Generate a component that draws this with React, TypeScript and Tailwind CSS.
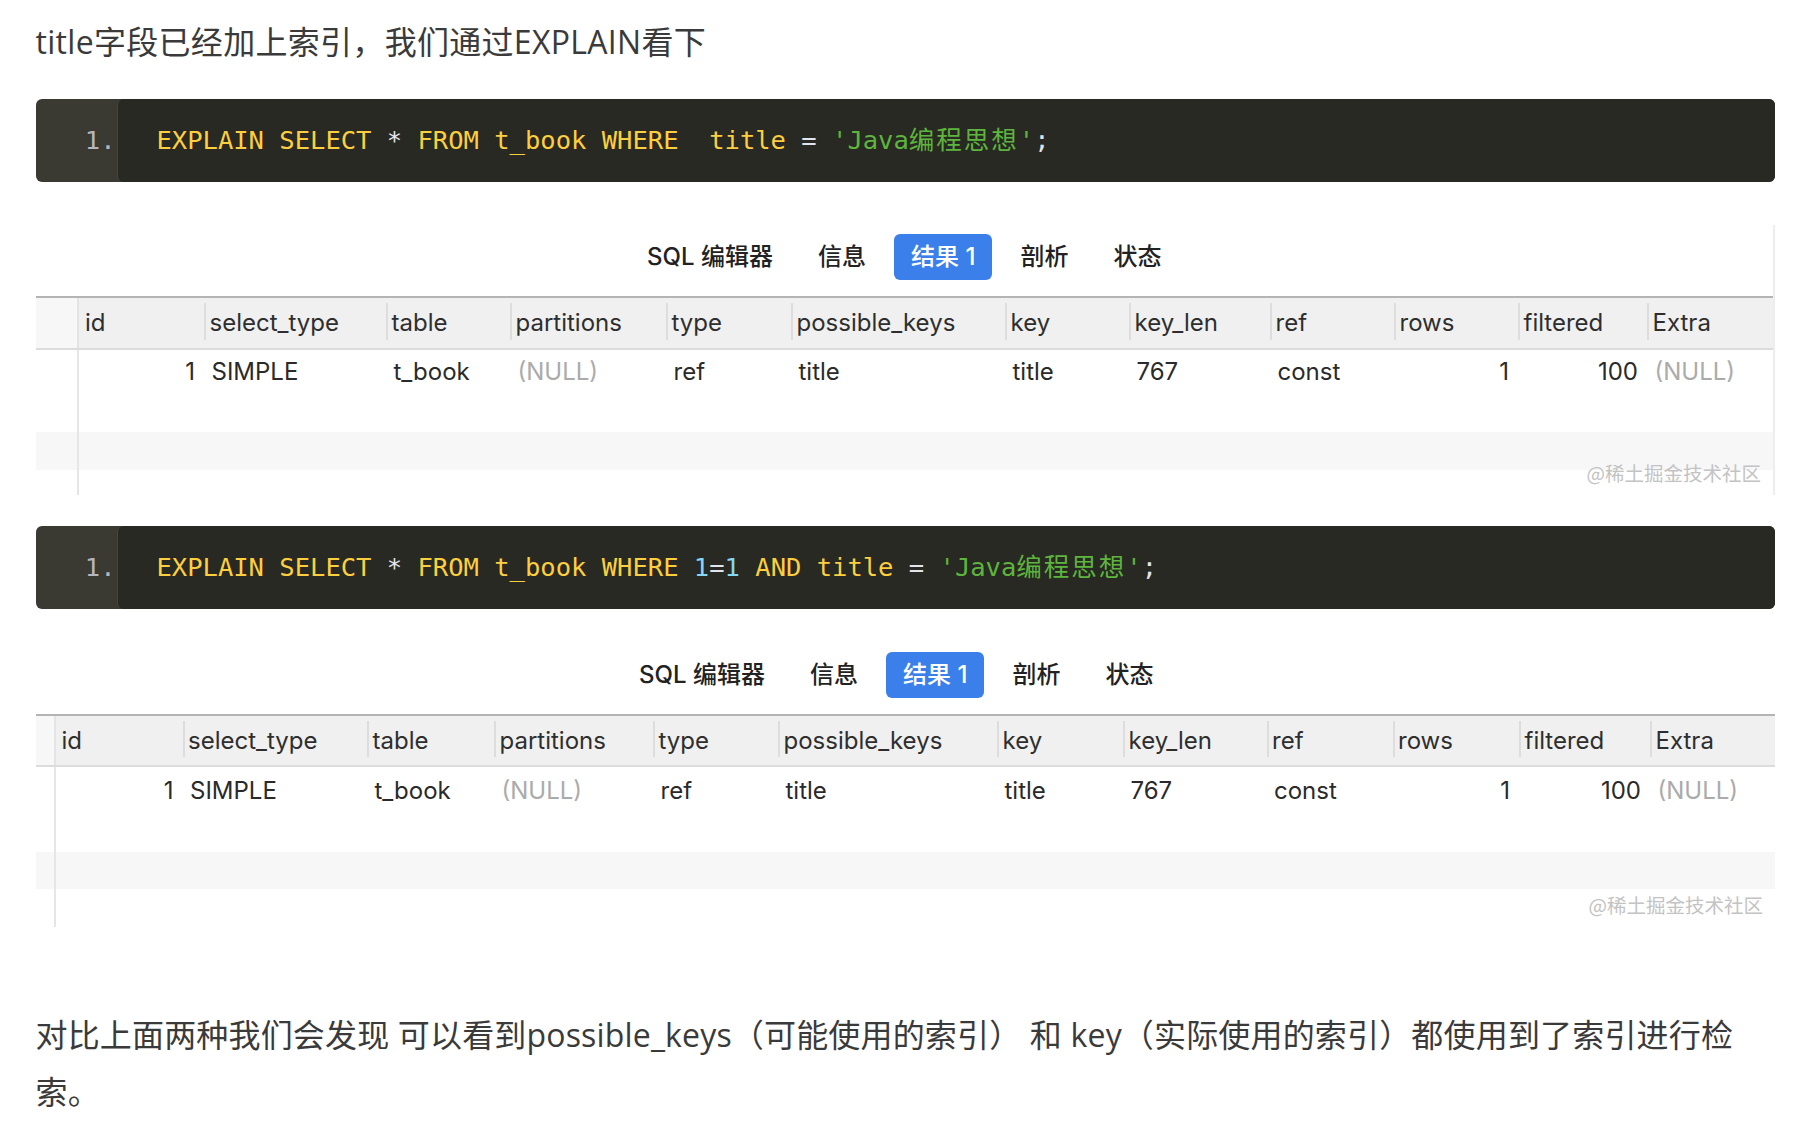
import React from "react";

const GRID1 =
  "grid grid-cols-[43.5px_125px_182px_124px_156px_125px_214px_124px_141px_124px_124px_129px_125px_1fr]";
const GRID2 =
  "grid grid-cols-[20px_127px_184.5px_127px_159px_125px_219px_126px_143.5px_126px_126.5px_131px_125px_1fr]";

const HEADERS = [
  "id",
  "select_type",
  "table",
  "partitions",
  "type",
  "possible_keys",
  "key",
  "key_len",
  "ref",
  "rows",
  "filtered",
  "Extra",
];

type Cell = { v: string; align: "l" | "r"; muted?: boolean };
const ROW: Cell[] = [
  { v: "1", align: "r" },
  { v: "SIMPLE", align: "l" },
  { v: "t_book", align: "l" },
  { v: "(NULL)", align: "l", muted: true },
  { v: "ref", align: "l" },
  { v: "title", align: "l" },
  { v: "title", align: "l" },
  { v: "767", align: "l" },
  { v: "const", align: "l" },
  { v: "1", align: "r" },
  { v: "100", align: "r" },
  { v: "(NULL)", align: "l", muted: true },
];

const ui = { fontFamily: 'Inter, "Noto Sans CJK SC", sans-serif' };
const mono = { fontFamily: '"DejaVu Sans Mono", "Noto Sans CJK SC", monospace' };

function CodeBlock({ second }: { second?: boolean }) {
  return (
    <div className="flex h-[83px] rounded-[6px] overflow-hidden bg-[#3a3932]" style={mono}>
      <div className="w-[81px] shrink-0 flex items-center justify-end pr-[1px] text-[25.5px] text-[#b6b6be]">
        1.
      </div>
      <div className="flex-1 flex items-center pl-[39px] bg-[#282923] rounded-l-[6px] border-l border-[#46453d] text-[25.5px] whitespace-pre">
        <span className="text-[#fdcf3e]">EXPLAIN SELECT </span>
        <span className="text-[#e4e4ec]">*</span>
        <span className="text-[#fdcf3e]"> FROM t_book WHERE </span>
        {second ? (
          <>
            <span className="text-[#84d8f4]">1</span>
            <span className="text-[#e4e4ec]">=</span>
            <span className="text-[#84d8f4]">1</span>
            <span className="text-[#fdcf3e]"> AND title </span>
          </>
        ) : (
          <span className="text-[#fdcf3e]"> title </span>
        )}
        <span className="text-[#e4e4ec]">=</span>
        <span className="text-[#5db53d]"> 'Java</span>
        <span className="text-[#5db53d] tracking-[2px]">编程思想</span>
        <span className="text-[#5db53d]">'</span>
        <span className="text-[#e4e4ec]">;</span>
      </div>
    </div>
  );
}

function Tabs({ shift }: { shift?: boolean }) {
  const tabs = ["SQL 编辑器", "信息", "结果 1", "剖析", "状态"];
  return (
    <div
      className={
        "flex justify-center gap-[11px] " + (shift ? "pr-[18px]" : "")
      }
    >
      {tabs.map((t) => (
        <div
          key={t}
          className={
            "h-[46px] px-[17px] flex items-center rounded-[6px] text-[24px] font-medium " +
            (t === "结果 1" ? "bg-[#3a7fea] text-white" : "text-[#222222]")
          }
        >
          {t}
        </div>
      ))}
    </div>
  );
}

function ResultShot({ second }: { second?: boolean }) {
  const grid = second ? GRID2 : GRID1;
  return (
    <div
      className={
        "relative bg-white pt-[9px] " +
        (second ? "mt-[34px]" : "mt-[43px] border-r-2 border-[#ededed]")
      }
      style={ui}
    >
      <Tabs shift={second} />
      <div className="mt-[16px]">
        {/* header */}
        <div
          className={
            grid +
            " border-t-2 border-b-2 border-t-[#b4b4b4] border-b-[#dcdcdc] bg-[#f0f0f0] " +
            (second ? "h-[53px]" : "h-[54px]")
          }
        >
          <div className="bg-[#f7f7f7] border-r-2 border-[#e4e4e4]" />
          {HEADERS.map((h, i) => (
            <div key={h} className="flex items-center overflow-hidden">
              {i > 0 && (
                <span className="w-[2px] self-stretch mt-[5px] mb-[8px] bg-[#dddddd] shrink-0" />
              )}
              <span
                className={
                  "text-[24px] text-[#2e2e2e] whitespace-nowrap " +
                  (i > 0 ? "ml-[3.5px]" : "ml-[6px]")
                }
              >
                {h}
              </span>
            </div>
          ))}
        </div>
        {/* data row */}
        <div className={grid + (second ? " h-[85px]" : " h-[82px]")}>
          <div className="border-r-2 border-[#e6e6e6]" />
          {ROW.map((c, i) => (
            <div
              key={i}
              className={
                "text-[24px] leading-[26px] whitespace-nowrap " +
                (second ? "pt-[11px] " : "pt-[9px] ") +
                (c.align === "r" ? "text-right pr-[9px] " : "pl-[7.5px] ") +
                (c.muted ? "text-[#ababab]" : "text-[#2a2a2a]")
              }
            >
              {c.v}
            </div>
          ))}
        </div>
        {/* stripe row */}
        <div className={grid + " bg-[#f7f7f7]" + (second ? " h-[37px]" : " h-[38px]")}>
          <div className="border-r-2 border-[#e6e6e6]" />
        </div>
        {/* tail */}
        <div className={grid + (second ? " h-[38px]" : " h-[25px]")}>
          <div className="border-r-2 border-[#e6e6e6]" />
        </div>
      </div>
      <div
        className={
          "absolute right-[12px] text-[19.5px] leading-[22px] text-[#c3c3c3] " +
          (second ? "bottom-[11px]" : "bottom-[11px]")
        }
        style={{ fontFamily: '"Noto Sans CJK SC", sans-serif' }}
      >
        @稀土掘金技术社区
      </div>
    </div>
  );
}

export default function App() {
  const body = { fontFamily: '"Open Sans", "Noto Sans CJK SC", sans-serif' };
  return (
    <div className="w-[1802px] h-[1134px] overflow-hidden bg-white pl-[35.5px] pr-[27px]">
      <p
        className="pt-[14px] text-[32px] leading-[56px] text-[#3a3a3a] tracking-[0.3px]"
        style={body}
      >
        title字段已经加上索引，我们通过EXPLAIN看下
      </p>
      <div className="mt-[29px]">
        <CodeBlock />
      </div>
      <ResultShot />
      <div className="mt-[31px]">
        <CodeBlock second />
      </div>
      <ResultShot second />
      <p
        className="mt-[79px] text-[32px] leading-[57px] text-[#3a3a3a] whitespace-nowrap tracking-[0.17px]"
        style={body}
      >
        对比上面两种我们会发现 可以看到possible_keys（可能使用的索引） 和 key（实际使用的索引）都使用到了索引进行检
        <br />
        索。
      </p>
    </div>
  );
}
